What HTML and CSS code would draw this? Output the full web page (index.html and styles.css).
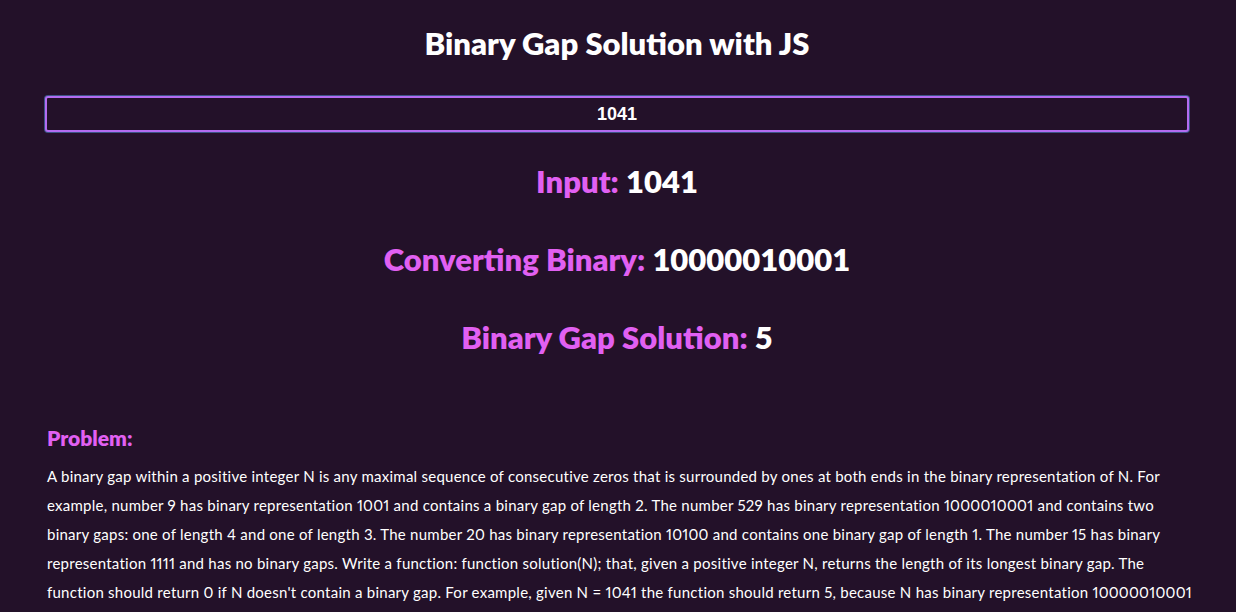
FILE: index.html
```html
<!DOCTYPE html>
<html lang="en">
<head>
<meta charset="utf-8">
<title>Binary Gap Solution with JS</title>
<link rel="stylesheet" href="styles.css">
</head>
<body>
<main class="page">
  <h1 class="title">Binary Gap Solution with JS</h1>
  <input class="number-input" type="text" value="1041">
  <div class="results">
    <h2 class="result"><span class="label">Input:</span> <span class="value">1041</span></h2>
    <h2 class="result"><span class="label">Converting Binary:</span> <span class="value">10000010001</span></h2>
    <h2 class="result"><span class="label">Binary Gap Solution:</span> <span class="value">5</span></h2>
  </div>
  <section class="problem">
    <h3 class="problem-title">Problem:</h3>
    <p class="problem-text">A binary gap within a positive integer N is any maximal sequence of consecutive zeros that is surrounded by ones at both ends in the binary representation of N. For example, number 9 has binary representation 1001 and contains a binary gap of length 2. The number 529 has binary representation 1000010001 and contains two binary gaps: one of length 4 and one of length 3. The number 20 has binary representation 10100 and contains one binary gap of length 1. The number 15 has binary representation 1111 and has no binary gaps. Write a function: function solution(N); that, given a positive integer N, returns the length of its longest binary gap. The function should return 0 if N doesn't contain a binary gap. For example, given N = 1041 the function should return 5, because N has binary representation 10000010001 and so its longest binary gap is of length 5.</p>
  </section>
</main>
</body>
</html>
```

FILE: styles.css
```css
html, body {
  margin: 0;
  padding: 0;
  background: #231129;
}
body {
  font-family: "Lato", "Noto Sans", sans-serif;
  color: #ffffff;
}
.page {
  padding: 0 47px 0 45px;
  display: flex;
  flex-direction: column;
}
.title {
  margin: 25px 0 0;
  text-align: center;
  font-size: 31px;
  line-height: 36px;
  font-weight: 800;
}
.number-input {
  margin-top: 35px;
  height: 36px;
  box-sizing: border-box;
  border: 2px solid #b36cf2;
  border-radius: 3px;
  box-shadow: 0 0 0 1px #3b5586;
  background: #231129;
  color: #ffffff;
  text-align: center;
  font-family: "Liberation Sans", Arial, sans-serif;
  font-weight: 700;
  font-size: 18px;
  outline: none;
  padding: 0;
}
.results {
  display: flex;
  flex-direction: column;
  gap: 42px;
  margin-top: 31px;
}
.result {
  margin: 0;
  text-align: center;
  font-size: 31px;
  line-height: 36px;
  font-weight: 800;
}
.label {
  color: #e160f2;
}
.value {
  color: #ffffff;
}
.problem {
  margin-top: 69px;
  margin-right: -6px;
  padding-left: 2px;
}
.problem-title {
  margin: 0;
  color: #e160f2;
  font-size: 21px;
  line-height: 28px;
  font-weight: 800;
}
.problem-text {
  margin: 10px 0 0;
  font-size: 15px;
  line-height: 29px;
  letter-spacing: 0.25px;
  font-variant-numeric: proportional-nums;
  color: #ffffff;
}
```
